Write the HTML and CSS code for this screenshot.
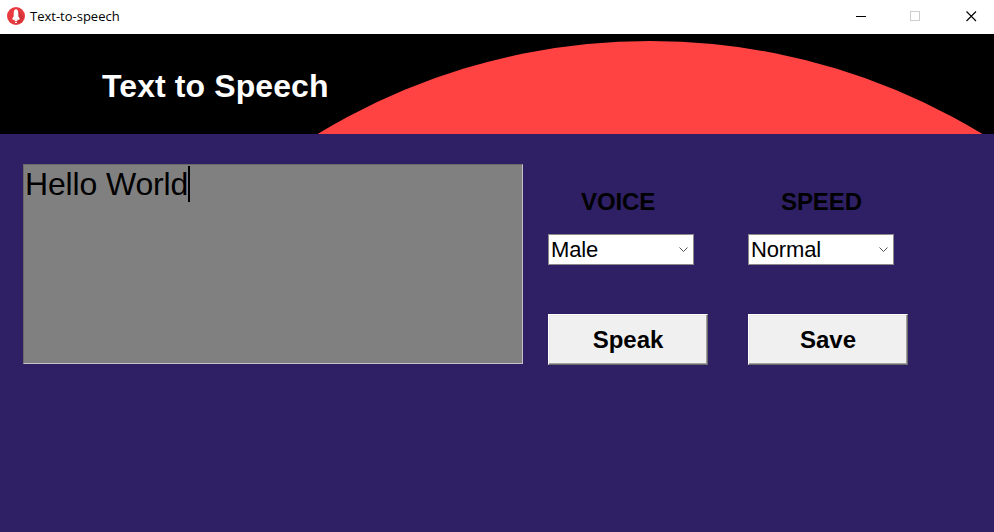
FILE: index.html
```html
<!DOCTYPE html>
<html lang="en">
<head>
<meta charset="utf-8">
<title>Text-to-speech</title>
<link rel="stylesheet" href="styles.css">
</head>
<body>
<div class="window">
  <div class="titlebar">
    <svg class="app-icon" width="18" height="18" viewBox="0 0 18 18">
      <circle cx="9" cy="9" r="9" fill="#e8393f"/>
      <path d="M10 2l7 8-3 5-4 2z" fill="#cf3238"/>
      <path d="M9 2.200c1.700 0 2.300 1.800 2.300 4v3.300l1.200 1.500v1.800H5.500V11l1.200-1.500V6.200c0-2.200.6-4 2.300-4z" fill="#fff"/>
      <path d="M7.600 12.500h2.800v1.500H7.600zM8 14.800h2v1.200H8z" fill="#fff"/>
    </svg>
    <span class="caption">Text-to-speech</span>
    <svg class="controls" width="138" height="34" viewBox="0 0 138 34" fill="none">
      <path d="M0 16.500h10" stroke="#000"/>
      <rect x="54.500" y="11.500" width="9" height="9" stroke="#ccc"/>
      <path d="M110.500 11.500l9.500 9.500M120 11.500l-9.500 9.500" stroke="#000" stroke-width="1.100"/>
    </svg>
  </div>
  <header class="banner">
    <h1>Text to Speech</h1>
    <svg class="sun" width="666" height="100" viewBox="318 0 666 100"><circle cx="650" cy="648" r="641" fill="#ff4343"/></svg>
  </header>
  <main class="content">
    <div class="editor"><span class="typed">Hello World</span><span class="caret"></span></div>
    <section class="option">
      <h2>VOICE</h2>
      <div class="combo"><span>Male</span><svg width="9" height="5" viewBox="0 0 9 5" fill="none"><path d="M.5.5l4 4 4-4" stroke="#555"/></svg></div>
      <button>Speak</button>
    </section>
    <section class="option">
      <h2>SPEED</h2>
      <div class="combo"><span>Normal</span><svg width="9" height="5" viewBox="0 0 9 5" fill="none"><path d="M.5.5l4 4 4-4" stroke="#555"/></svg></div>
      <button>Save</button>
    </section>
  </main>
</div>
</body>
</html>
```
FILE: styles.css
```css
* { box-sizing: border-box; }
body { margin: 0; font-family: "Liberation Sans", Arial, sans-serif; color: #000; }
.window { display: flex; flex-direction: column; width: 994px; height: 532px; overflow: hidden; background: #2f2065; }
.titlebar { display: flex; align-items: center; height: 34px; padding-left: 7px; background: #fff; }
.app-icon { margin-top: -2px; }
.caption { margin: -2px 0 0 5px; font: 13px "Open Sans", sans-serif; }
.controls { margin-left: auto; }
.banner { display: flex; height: 100px; padding-left: 102px; background: #000; }
.banner h1 { width: 216px; margin: 0; padding-top: 34px; font-size: 32px; line-height: 37px; letter-spacing: 0.1px; white-space: nowrap; color: #fff; }
.sun { flex: none; }
.content { display: flex; padding: 30px 0 0 23px; }
.editor { display: flex; width: 500px; height: 200px; margin-right: 25px; padding: 1px; background: #808080; border: 1px solid; border-color: #696969 #c4c2c8 #c4c2c8 #696969; font-size: 32px; line-height: 37px; }
.typed { letter-spacing: -0.15px; white-space: nowrap; }
.caret { width: 2px; height: 36px; background: #000; }
.option { width: 200px; }
.option h2 { margin: 0 0 18px 33px; padding-top: 24px; font-size: 24px; line-height: 28px; letter-spacing: -0.1px; }
.combo { display: flex; align-items: center; justify-content: space-between; width: 146px; height: 31px; padding: 0 5px 0 2px; background: #fff; border: 1px solid #8a8a8a; font-size: 22px; line-height: 29px; letter-spacing: -0.15px; }
.option button { display: block; width: 160px; height: 51px; margin-top: 49px; padding: 0; background: #f0f0f0; border: 1px solid; border-color: #fff #696969 #696969 #fff; box-shadow: inset -1px -1px #a0a0a0, inset 1px 1px #e8e8e8; font: bold 24px "Liberation Sans", Arial, sans-serif; color: #000; }
```
